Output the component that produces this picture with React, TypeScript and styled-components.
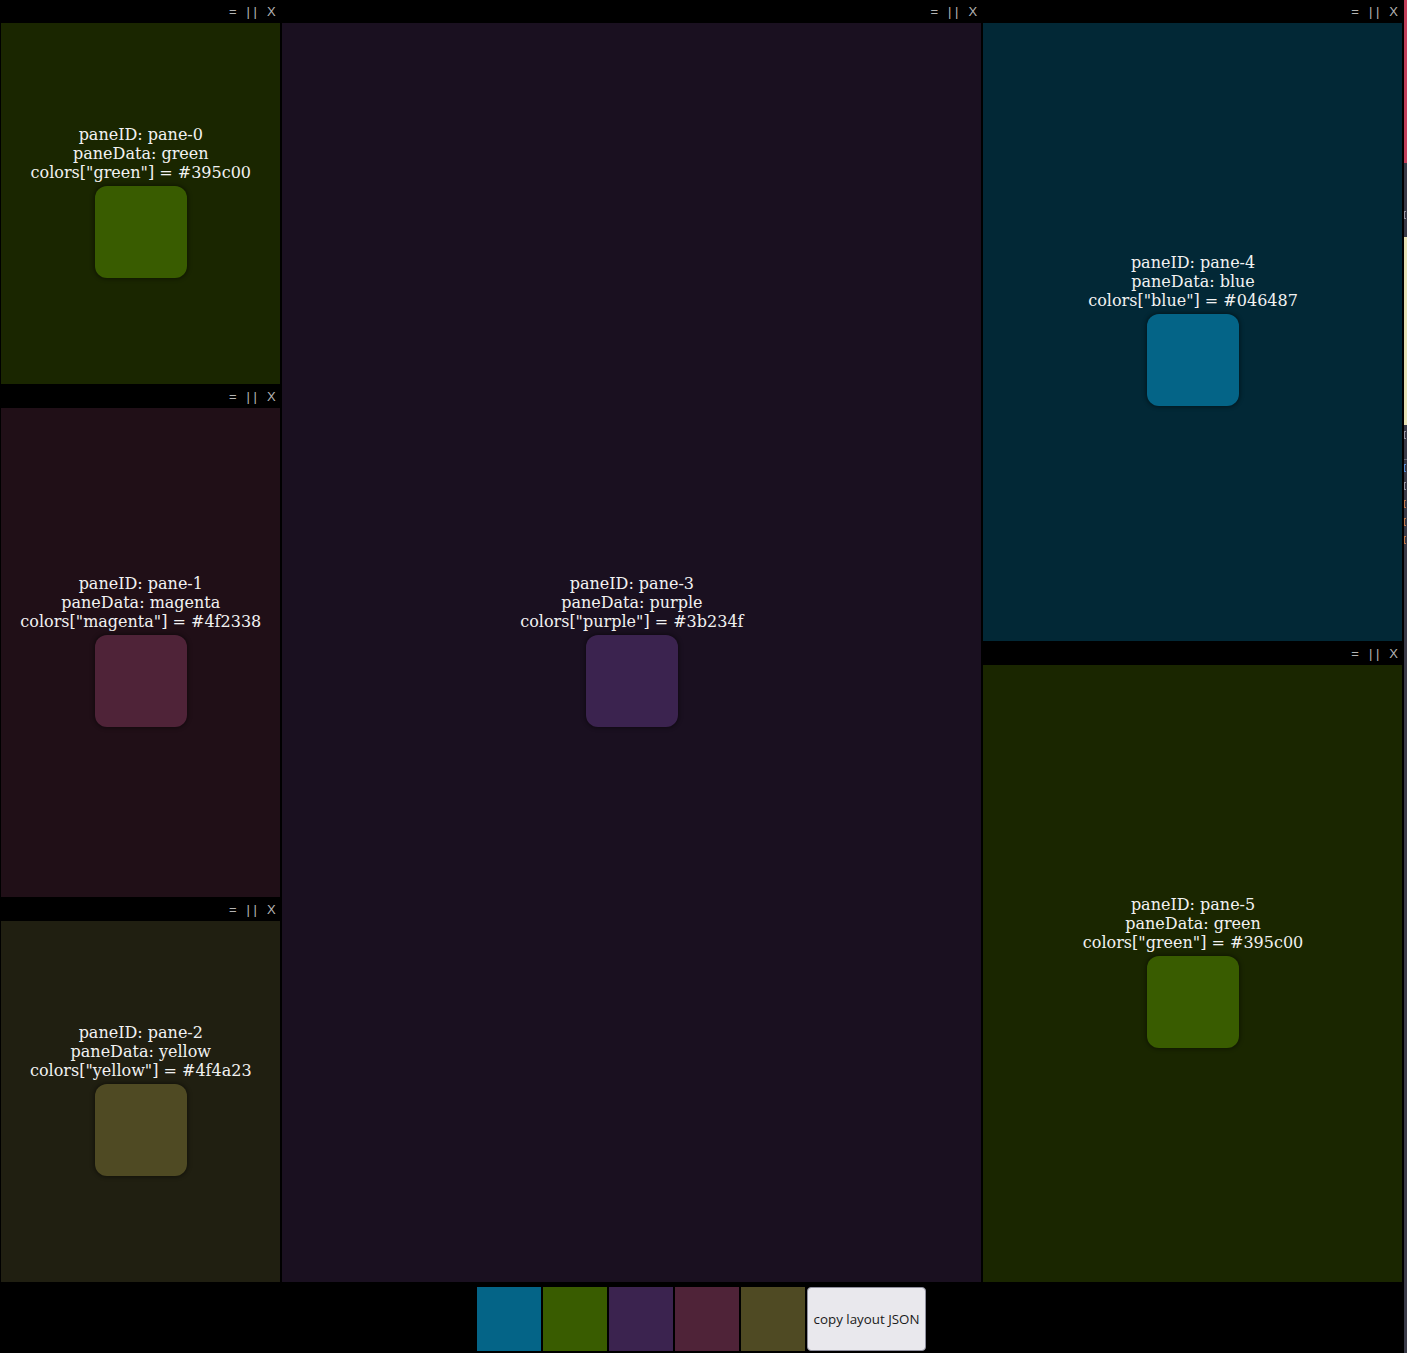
import React from "react";
import styled, { createGlobalStyle } from "styled-components";

const Global = createGlobalStyle`
  html, body { margin: 0; padding: 0; background: #000; }
  body { overflow: hidden; }
  #root { height: 100vh; }
`;

const colors: Record<string, string> = {
  blue: "#046487",
  green: "#395c00",
  purple: "#3b234f",
  magenta: "#4f2338",
  yellow: "#4f4a23",
};

const tints: Record<string, string> = {
  blue: "#022836",
  green: "#1a2600",
  purple: "#1a1020",
  magenta: "#200f17",
  yellow: "#201f11",
};

type PaneDef = { id: string; data: string; flex: number };
type ColDef = { width: string; panes: PaneDef[] };

const layout: ColDef[] = [
  {
    width: "20%",
    panes: [
      { id: "pane-0", data: "green", flex: 3 },
      { id: "pane-1", data: "magenta", flex: 4 },
      { id: "pane-2", data: "yellow", flex: 3 },
    ],
  },
  { width: "50%", panes: [{ id: "pane-3", data: "purple", flex: 1 }] },
  {
    width: "30%",
    panes: [
      { id: "pane-4", data: "blue", flex: 1 },
      { id: "pane-5", data: "green", flex: 1 },
    ],
  },
];

const Page = styled.div`
  display: flex;
  height: 100vh;
  width: 100vw;
  background: #000;
`;

const Workspace = styled.div`
  width: 1403px;
  display: flex;
  flex-direction: column;
`;

const Columns = styled.div`
  flex: 1;
  display: flex;
  min-height: 0;
`;

const Column = styled.div<{ $w: string }>`
  width: ${(p) => p.$w};
  display: flex;
  flex-direction: column;
`;

const Pane = styled.div<{ $flex: number }>`
  flex: ${(p) => p.$flex} 1 0;
  display: flex;
  flex-direction: column;
  border: 1px solid #000;
  min-height: 0;
`;

const PaneHeader = styled.div`
  height: 22px;
  flex: 0 0 22px;
  background: #000;
  display: flex;
  justify-content: flex-end;
  align-items: center;
  gap: 10px;
  padding-right: 4px;
  padding-bottom: 1px;
  box-sizing: border-box;
  font-family: "Liberation Sans", Arial, sans-serif;
  font-size: 13px;
  color: #b4b4b4;
  white-space: pre;
`;

const Control = styled.span`
  cursor: pointer;
  line-height: 1;
`;

const PaneBody = styled.div<{ $bg: string }>`
  flex: 1;
  background: ${(p) => p.$bg};
  display: flex;
  flex-direction: column;
  align-items: center;
  justify-content: center;
  padding-left: 1px;
  font-family: "DejaVu Serif", serif;
  font-size: 16px;
  color: #f2f2f2;
  text-align: center;
`;

const Line = styled.div`
  line-height: 19px;
  white-space: pre;
`;

const Swatch = styled.div<{ $c: string }>`
  width: 92px;
  height: 92px;
  margin-top: 4px;
  margin-bottom: 4px;
  border-radius: 12px;
  background: ${(p) => p.$c};
  box-shadow: 0 0 4px 1px rgba(0, 0, 0, 0.45);
`;

const BottomBar = styled.div`
  height: 70px;
  flex: 0 0 70px;
  display: flex;
  justify-content: center;
  align-items: flex-start;
  padding-top: 4px;
  box-sizing: border-box;
  gap: 2px;
`;

const ColorButton = styled.div<{ $c: string }>`
  width: 64px;
  height: 64px;
  background: ${(p) => p.$c};
`;

const CopyButton = styled.button`
  width: 119px;
  height: 64px;
  background: #e9e8ed;
  border: 1px solid #8f8f9d;
  border-radius: 4px;
  font-family: "Open Sans", "Noto Sans", sans-serif;
  font-size: 13.333px;
  color: #1a1a1a;
  padding: 0;
  cursor: pointer;
`;

const SideStrip = styled.div`
  flex: 1;
  border-left: 1px solid #000;
  background: #3a3b48;
  display: flex;
  flex-direction: column;
  overflow: hidden;
`;

const StripBlock = styled.div<{ $h: number; $c: string; $mt?: number }>`
  height: ${(p) => p.$h}px;
  flex: 0 0 ${(p) => p.$h}px;
  margin-top: ${(p) => p.$mt ?? 0}px;
  background: ${(p) => p.$c};
`;

const StripMark = styled.div<{ $c: string; $mt: number }>`
  margin-top: ${(p) => p.$mt}px;
  width: 2px;
  height: 8px;
  flex: 0 0 8px;
  border-left: 1px solid ${(p) => p.$c};
  border-top: 1px solid ${(p) => p.$c};
  border-bottom: 1px solid ${(p) => p.$c};
  box-sizing: border-box;
`;

function PaneView({ pane }: { pane: PaneDef }) {
  return (
    <Pane $flex={pane.flex}>
      <PaneHeader>
        <Control>=</Control>
        <Control>| |</Control>
        <Control>X</Control>
      </PaneHeader>
      <PaneBody $bg={tints[pane.data]}>
        <Line>paneID: {pane.id}</Line>
        <Line>paneData: {pane.data}</Line>
        <Line>
          colors["{pane.data}"] = {colors[pane.data]}
        </Line>
        <Swatch $c={colors[pane.data]} />
      </PaneBody>
    </Pane>
  );
}

export default function App() {
  return (
    <>
      <Global />
      <Page>
        <Workspace>
          <Columns>
            {layout.map((col, i) => (
              <Column key={i} $w={col.width}>
                {col.panes.map((p) => (
                  <PaneView key={p.id} pane={p} />
                ))}
              </Column>
            ))}
          </Columns>
          <BottomBar>
            {["blue", "green", "purple", "magenta", "yellow"].map((k) => (
              <ColorButton key={k} $c={colors[k]} title={k} />
            ))}
            <CopyButton>copy layout JSON</CopyButton>
          </BottomBar>
        </Workspace>
        <SideStrip>
          <StripBlock $h={163} $c="#c4405c" />
          <StripMark $c="#9a9aa8" $mt={48} />
          <StripBlock $h={188} $c="#e8e3b6" $mt={18} />
          <StripMark $c="#9a9aa8" $mt={6} />
          <StripBlock $h={1} $c="#6a6a78" $mt={20} />
          <StripMark $c="#5c8fd6" $mt={4} />
          <StripMark $c="#9a9aa8" $mt={10} />
          <StripMark $c="#c07a50" $mt={10} />
          <StripMark $c="#c07a50" $mt={10} />
          <StripMark $c="#c07a50" $mt={10} />
        </SideStrip>
      </Page>
    </>
  );
}
